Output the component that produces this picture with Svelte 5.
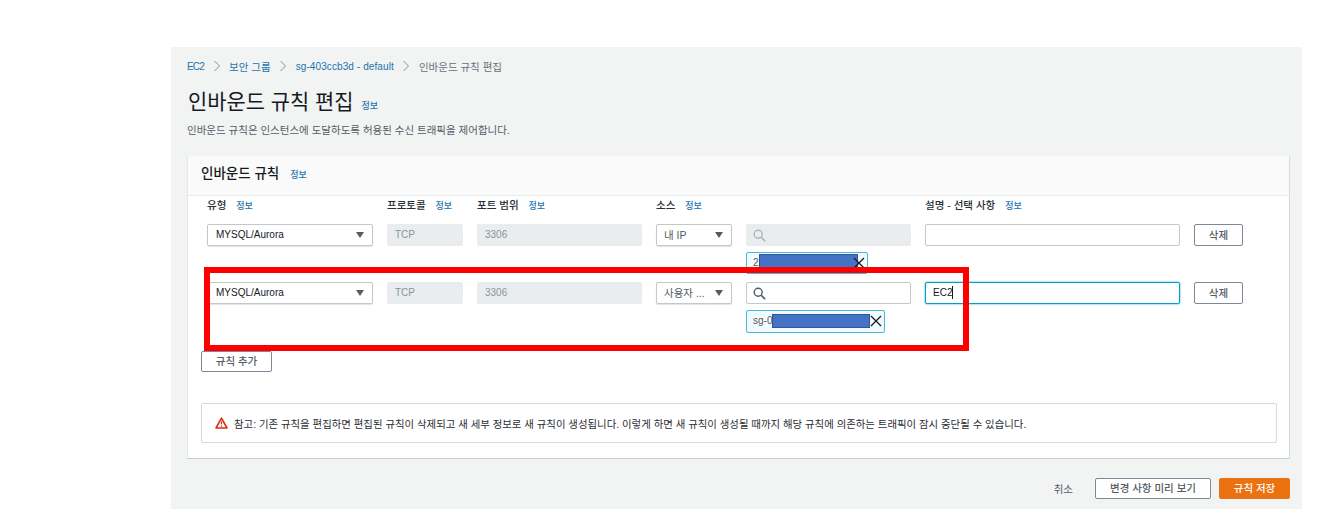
<script>
  const rules = [
    { source: "내 IP", searchOff: true, chip: "2", chipW: 122, chipH: 22, barW: 99, barX: 12, barY: 1, desc: "", focus: false },
    { source: "사용자 ...", searchOff: false, chip: "sg-0", chipW: 139, chipH: 23, barW: 98, barX: 25, barY: 3, desc: "EC2", focus: true }
  ];
</script>

{#snippet info()}<span class="info">정보</span>{/snippet}
{#snippet sep()}<svg width="8" height="12" viewBox="0 0 8 12"><path d="M1.5 1l5 5-5 5" fill="none" stroke="#879596" stroke-width="1"/></svg>{/snippet}

<div class="page">
  <main class="panel">
    <nav class="crumbs">
      <span class="link ec2">EC2</span>
      {@render sep()}
      <span class="link">보안 그룹</span>
      {@render sep()}
      <span class="link sg">sg-403ccb3d - default</span>
      {@render sep()}
      <span class="current">인바운드 규칙 편집</span>
    </nav>

    <div class="title"><h1>인바운드 규칙 편집</h1>{@render info()}</div>
    <p class="sub">인바운드 규칙은 인스턴스에 도달하도록 허용된 수신 트래픽을 제어합니다.</p>

    <section class="card">
      <header class="card-head"><h2>인바운드 규칙</h2>{@render info()}</header>
      <div class="card-body">
        <div class="grid labels">
          <div class="lab">유형 {@render info()}</div>
          <div class="lab">프로토콜 {@render info()}</div>
          <div class="lab">포트 범위 {@render info()}</div>
          <div class="lab">소스 {@render info()}</div>
          <div></div>
          <div class="lab">설명 - 선택 사항 {@render info()}</div>
          <div></div>
        </div>

        {#each rules as r}
          <div class="grid row">
            <div class="field select">MYSQL/Aurora<i class="caret"></i></div>
            <div class="field off">TCP</div>
            <div class="field off">3306</div>
            <div class="field select ko">{r.source}<i class="caret"></i></div>
            <div class="search-col">
              <div class="field search" class:off={r.searchOff}>
                <svg width="13" height="13" viewBox="0 0 13 13" class:dim={r.searchOff}><circle cx="5.2" cy="5.2" r="4" fill="none" stroke="currentColor" stroke-width="1.4"/><path d="M8.2 8.2l4 4" stroke="currentColor" stroke-width="1.6"/></svg>
              </div>
              <div class="chip" style="width:{r.chipW}px;height:{r.chipH}px">
                {r.chip}
                <span class="redact" style="left:{r.barX}px;top:{r.barY}px;width:{r.barW}px"></span>
                <svg class="x" width="12" height="12" viewBox="0 0 12 12"><path d="M1 1l10 10M11 1L1 11" stroke="#16191f" stroke-width="1.3" fill="none"/></svg>
              </div>
            </div>
            <div class="field desc" class:focus={r.focus}>{r.desc}{#if r.focus}<span class="cursor"></span>{/if}</div>
            <button class="btn del">삭제</button>
          </div>
        {/each}

        <button class="btn add">규칙 추가</button>

        <div class="alert">
          <svg width="13" height="12" viewBox="0 0 13 12"><path d="M6.5 1.2L12 11H1z" fill="none" stroke="#d13212" stroke-width="1.6" stroke-linejoin="round"/><path d="M6.5 4.2v3.4M6.5 8.4v1.3" stroke="#d13212" stroke-width="1.3"/></svg>
          <span>참고: 기존 규칙을 편집하면 편집된 규칙이 삭제되고 새 세부 정보로 새 규칙이 생성됩니다. 이렇게 하면 새 규칙이 생성될 때까지 해당 규칙에 의존하는 트래픽이 잠시 중단될 수 있습니다.</span>
        </div>
      </div>
    </section>

    <footer class="actions">
      <span class="cancel">취소</span>
      <button class="btn preview">변경 사항 미리 보기</button>
      <button class="btn save">규칙 저장</button>
    </footer>

    <div class="highlight"></div>
  </main>
</div>

<style>
  :global(body) {
    margin: 0;
    background: #fff;
  }

  .page {
    height: 520px;
    padding: 47px 22px 0 171px;
    box-sizing: border-box;
    font-family: "Liberation Sans", "Noto Sans CJK KR", sans-serif;
    font-size: 10.5px;
    color: #16191f;
  }

  .panel {
    position: relative;
    height: 462px;
    box-sizing: border-box;
    background: #f2f3f3;
    padding: 12px 12px 0 16px;
  }

  .crumbs {
    display: flex;
    align-items: center;
    gap: 8.5px;
    height: 14px;
  }

  .link, .info {
    color: #1b74b0;
  }

  .ec2 {
    font-size: 10px;
    letter-spacing: -0.8px;
  }

  .sg {
    font-size: 10px;
    letter-spacing: 0.1px;
  }

  .current {
    color: #687078;
  }

  .title {
    display: flex;
    align-items: baseline;
    gap: 8px;
    margin-top: 16px;
    padding-left: 1px;
  }

  h1 {
    margin: 0;
    font-size: 20.9px;
    font-weight: 400;
    line-height: 26px;
  }

  .info {
    font-size: 9px;
    font-weight: 500;
  }

  .sub {
    margin: 8px 0 0;
    line-height: 14px;
    color: #545b64;
  }

  .card {
    margin-top: 19px;
    height: 303px;
    box-sizing: border-box;
    background: #fff;
    border-bottom: 1px solid #c8cece;
    border-right: 1px solid #d5dbdb;
    border-left: 1px solid #e6e8e8;
  }

  .card-head {
    display: flex;
    align-items: baseline;
    gap: 11px;
    height: 40px;
    box-sizing: border-box;
    padding: 9px 13px 0;
    background: #fafafa;
    border-bottom: 1px solid #eaeded;
  }

  h2 {
    margin: 0;
    font-size: 13.5px;
    font-weight: 500;
    line-height: 18px;
  }

  .card-body {
    padding: 0 12px 0 13px;
  }

  .grid {
    display: grid;
    grid-template-columns: 166px 76px 165px 76px 165px 255px 49px;
    column-gap: 14px;
    padding-left: 6px;
    align-items: start;
  }

  .labels {
    height: 28px;
    padding-top: 2px;
    box-sizing: border-box;
  }

  .lab {
    line-height: 14px;
    font-weight: 500;
    color: #2a2e33;
    white-space: nowrap;
  }

  .lab .info {
    margin-left: 7px;
  }

  .row {
    height: 58px;
  }

  .field {
    height: 22px;
    box-sizing: border-box;
    border: 1px solid #aab7b8;
    border-radius: 2px;
    background: #fff;
    padding: 0 7px;
    line-height: 20px;
    font-size: 10px;
    color: #16191f;
  }

  .select {
    position: relative;
    padding-left: 8px;
    border-color: #c3c9c9;
    box-shadow: 0 1px 1px rgba(0, 28, 36, 0.12);
    white-space: nowrap;
  }

  .ko {
    padding-left: 7px;
    font-size: 10.5px;
    color: #545b64;
  }

  .caret {
    position: absolute;
    right: 8px;
    top: 7px;
    border-left: 4px solid transparent;
    border-right: 4px solid transparent;
    border-top: 6px solid #545b64;
  }

  .off {
    background: #eaeded;
    border-color: #eaeded;
    color: #879596;
  }

  .search {
    display: flex;
    align-items: center;
    padding-left: 6px;
    border-color: #c3c9c9;
    color: #545b64;
  }

  .search.off {
    border-color: #eaeded;
  }

  svg.dim {
    color: #aab7b8;
  }

  .chip {
    position: relative;
    box-sizing: border-box;
    margin-top: 6px;
    padding: 0 6px;
    line-height: 19px;
    font-size: 10px;
    background: #f1faff;
    border: 1px solid #44b9d6;
    border-radius: 2px;
    color: #545b64;
  }

  .redact {
    position: absolute;
    height: 14px;
    background: #4472c4;
    border: 1px solid #2f5597;
    box-sizing: border-box;
  }

  .x {
    position: absolute;
    right: 2px;
    top: 4px;
  }

  .desc {
    border-color: #c3c9c9;
    white-space: nowrap;
  }

  .focus {
    border-color: #00a1c9;
    box-shadow: 0 0 2px #00a1c9;
  }

  .cursor {
    display: inline-block;
    width: 1px;
    height: 13px;
    background: #16191f;
    vertical-align: -3px;
  }

  .btn {
    box-sizing: border-box;
    height: 21px;
    padding: 0 0 2px;
    background: #fff;
    border: 1px solid #7d8998;
    border-radius: 2px;
    font: 500 10.5px "Liberation Sans", "Noto Sans CJK KR", sans-serif;
    color: #545b64;
  }

  .del {
    height: 22px;
  }

  .add {
    display: block;
    width: 71px;
    margin-top: 11px;
  }

  .alert {
    display: flex;
    align-items: center;
    gap: 6px;
    margin-top: 31px;
    height: 40px;
    box-sizing: border-box;
    padding: 0 13px;
    border: 1px solid #d5dbdb;
    border-radius: 2px;
    font-size: 10.42px;
    color: #2a2e33;
    white-space: nowrap;
  }

  .actions {
    display: flex;
    align-items: center;
    justify-content: flex-end;
    gap: 8px;
    margin-top: 19px;
  }

  .cancel {
    margin-right: 14px;
    color: #545b64;
  }

  .preview {
    width: 116px;
  }

  .save {
    width: 71px;
    background: #ec7211;
    border-color: #ec7211;
    color: #fff;
  }

  .highlight {
    position: absolute;
    left: 33px;
    top: 220px;
    width: 765px;
    height: 84px;
    box-sizing: border-box;
    border: 6px solid #ff0000;
    pointer-events: none;
  }
</style>
